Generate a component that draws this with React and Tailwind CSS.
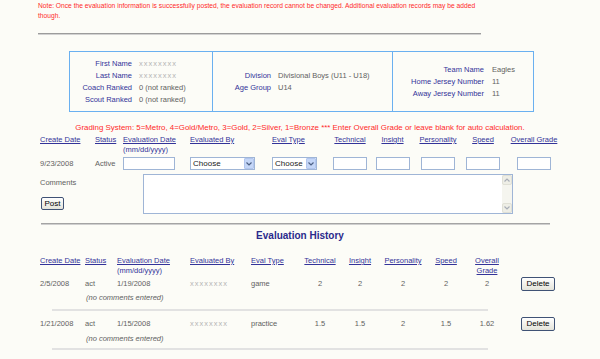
import React from "react";

const formCols =
  "grid grid-cols-[55px_28px_67px_82px_55px_46px_39px_52px_38px_64px]";
const histCols =
  "grid grid-cols-[45px_32px_73px_61px_48px_42px_38px_48px_38px_44px_58px]";

function H({ children }) {
  return <span className="underline text-[#333399]">{children}</span>;
}

function Chevron({ up = false, color = "#4d6185" }) {
  return (
    <svg width="6" height="4" viewBox="0 0 6 4" className="block">
      <path
        d={up ? "M0.5 3.5 L3 1 L5.5 3.5" : "M0.5 0.5 L3 3 L5.5 0.5"}
        fill="none"
        stroke={color}
        strokeWidth="1.2"
      />
    </svg>
  );
}

function Select({ w }) {
  return (
    <div
      className={`${w} h-[13px] border border-[#9fb5d6] bg-white flex items-center overflow-hidden`}
    >
      <span className="flex-1 pl-[2px] text-[8px] leading-[11px] text-[#222] whitespace-nowrap overflow-hidden">
        Choose
      </span>
      <div className="w-[10px] h-[11px] mr-[0px] rounded-[1px] bg-[#c4d6f7] border border-[#b2c6ee] flex items-center justify-center">
        <Chevron />
      </div>
    </div>
  );
}

function Box({ w }) {
  return <div className={`${w} h-[13px] border border-[#9fb5d6] bg-white`} />;
}

function Btn({ children, w, h }) {
  return (
    <div
      className={`${w} ${h} rounded-[2px] border border-[#3f5275] bg-gradient-to-b from-[#ffffff] to-[#e4e3da] flex items-center justify-center text-[8px] leading-[10px] text-black`}
    >
      {children}
    </div>
  );
}

function HistRow({ c, a, d, t, g }) {
  return (
    <div className={`ml-[40px] h-[14px] items-center ${histCols}`}>
      <span>{c}</span>
      <span>act</span>
      <span>{d}</span>
      <span className="text-[#b4b4b4] tracking-[1px]">xxxxxxxx</span>
      <span>{t}</span>
      {g.map((v, i) => (
        <span key={i} className="text-center">
          {v}
        </span>
      ))}
      <div className="flex justify-center">
        <Btn w="w-[34px]" h="h-[14px]">
          Delete
        </Btn>
      </div>
    </div>
  );
}

export default function App() {
  return (
    <div className="w-[600px] h-[359px] overflow-hidden bg-[#fcfcf7] font-['Liberation_Sans',Arial,sans-serif] text-[7.5px] leading-[10px] text-[#616161]">
      <p className="ml-[38px] pt-[1px] text-[6.7px] leading-[10px] text-[#ff2a2a] whitespace-nowrap">
        Note: Once the evaluation information is successfully posted, the
        evaluation record cannot be changed. Additional evaluation records may
        be added
        <br />
        though.
      </p>
      <div className="ml-[38px] mt-[12px] w-[443px] h-[2px] border-t border-t-[#9c9c9c] border-b border-b-[#d2d2d2]" />

      {/* info box */}
      <div className="ml-[69px] mt-[16px] w-[465px] h-[61px] border border-[#6ab0f0] flex">
        <div className="w-[143px] border-r border-[#6ab0f0] flex items-center">
          <div className="grid grid-cols-[62px_auto] gap-x-[7px] leading-[12px]">
            <span className="text-right text-[#333399]">First Name</span>
            <span className="text-[#b4b4b4] tracking-[1px]">xxxxxxxx</span>
            <span className="text-right text-[#333399]">Last Name</span>
            <span className="text-[#b4b4b4] tracking-[1px]">xxxxxxxx</span>
            <span className="text-right text-[#333399]">Coach Ranked</span>
            <span>0 (not ranked)</span>
            <span className="text-right text-[#333399]">Scout Ranked</span>
            <span>0 (not ranked)</span>
          </div>
        </div>
        <div className="w-[180px] border-r border-[#6ab0f0] flex items-center">
          <div className="grid grid-cols-[58px_auto] gap-x-[7px] leading-[12px]">
            <span className="text-right text-[#333399]">Division</span>
            <span>Divisional Boys (U11 - U18)</span>
            <span className="text-right text-[#333399]">Age Group</span>
            <span>U14</span>
          </div>
        </div>
        <div className="flex-1 flex items-center">
          <div className="grid grid-cols-[91px_auto] gap-x-[8px] leading-[12px]">
            <span className="text-right text-[#333399]">Team Name</span>
            <span>Eagles</span>
            <span className="text-right text-[#333399]">Home Jersey Number</span>
            <span>11</span>
            <span className="text-right text-[#333399]">Away Jersey Number</span>
            <span>11</span>
          </div>
        </div>
      </div>

      <p className="mt-[11px] text-center text-[7.9px] leading-[10px] text-[#ff2a2a] whitespace-nowrap">
        Grading System: 5=Metro, 4=Gold/Metro, 3=Gold, 2=Silver, 1=Bronze ***
        Enter Overall Grade or leave blank for auto calculation.
      </p>

      {/* form header */}
      <div className={`ml-[40px] mt-[2px] ${formCols}`}>
        <H>Create Date</H>
        <H>Status</H>
        <div className="flex flex-col">
          <H>Evaluation Date</H>
          <span className="text-[#333399]">(mm/dd/yyyy)</span>
        </div>
        <H>Evaluated By</H>
        <H>Eval Type</H>
        <div className="text-center">
          <H>Technical</H>
        </div>
        <div className="text-center">
          <H>Insight</H>
        </div>
        <div className="text-center">
          <H>Personality</H>
        </div>
        <div className="text-center">
          <H>Speed</H>
        </div>
        <div className="text-center">
          <H>Overall Grade</H>
        </div>
      </div>

      {/* form inputs */}
      <div className={`ml-[40px] mt-[1px] h-[15px] items-center ${formCols}`}>
        <span>9/23/2008</span>
        <span>Active</span>
        <Box w="w-[52px]" />
        <Select w="w-[65px]" />
        <Select w="w-[45px]" />
        <div className="flex justify-center">
          <Box w="w-[34px]" />
        </div>
        <div className="flex justify-center">
          <Box w="w-[34px]" />
        </div>
        <div className="flex justify-center">
          <Box w="w-[34px]" />
        </div>
        <div className="flex justify-center">
          <Box w="w-[34px]" />
        </div>
        <div className="flex justify-center">
          <Box w="w-[34px]" />
        </div>
      </div>

      {/* comments */}
      <div className="ml-[40px] mt-[3px] flex">
        <div className="w-[103px] pt-[4px]">
          <div>Comments</div>
          <div className="mt-[9px] ml-[1px]">
            <Btn w="w-[23px]" h="h-[13px]">
              Post
            </Btn>
          </div>
        </div>
        <div className="w-[370px] h-[40px] border border-[#9fb5d6] bg-white flex justify-end">
          <div className="w-[10px] h-full bg-[#f5f5ef] flex flex-col justify-between">
            <div className="h-[10px] rounded-[2px] bg-[#eeeee6] border border-[#e0e0d6] flex items-center justify-center">
              <Chevron up color="#a9aeb8" />
            </div>
            <div className="h-[10px] rounded-[2px] bg-[#eeeee6] border border-[#e0e0d6] flex items-center justify-center">
              <Chevron color="#a9aeb8" />
            </div>
          </div>
        </div>
      </div>

      <div className="ml-[41px] mt-[9px] w-[509px] h-[2px] border-t border-t-[#a4a4a4] border-b border-b-[#cfcfcf]" />

      <h2 className="mt-[5px] text-center text-[10px] leading-[12px] font-bold text-[#2a2a8c]">
        Evaluation History
      </h2>

      {/* history header */}
      <div className={`ml-[40px] mt-[14px] ${histCols}`}>
        <H>Create Date</H>
        <H>Status</H>
        <div className="flex flex-col">
          <H>Evaluation Date</H>
          <span className="text-[#333399]">(mm/dd/yyyy)</span>
        </div>
        <H>Evaluated By</H>
        <H>Eval Type</H>
        <div className="text-center">
          <H>Technical</H>
        </div>
        <div className="text-center">
          <H>Insight</H>
        </div>
        <div className="text-center">
          <H>Personality</H>
        </div>
        <div className="text-center">
          <H>Speed</H>
        </div>
        <div className="text-center">
          <H>Overall</H>
          <br />
          <H>Grade</H>
        </div>
        <span />
      </div>

      <div className="mt-[1px]">
        <HistRow c="2/5/2008" d="1/19/2008" t="game" g={["2", "2", "2", "2", "2"]} />
      </div>
      <p className="ml-[86px] mt-[2px] italic">(no comments entered)</p>
      <div className="ml-[52px] mt-[6px] w-[436px] h-[2px] bg-[#e2e2e2]" />

      <div className="mt-[6px]">
        <HistRow
          c="1/21/2008"
          d="1/15/2008"
          t="practice"
          g={["1.5", "1.5", "2", "1.5", "1.62"]}
        />
      </div>
      <p className="ml-[86px] mt-[3px] italic">(no comments entered)</p>
      <div className="ml-[52px] mt-[4px] w-[436px] h-[2px] bg-[#e2e2e2]" />
    </div>
  );
}
